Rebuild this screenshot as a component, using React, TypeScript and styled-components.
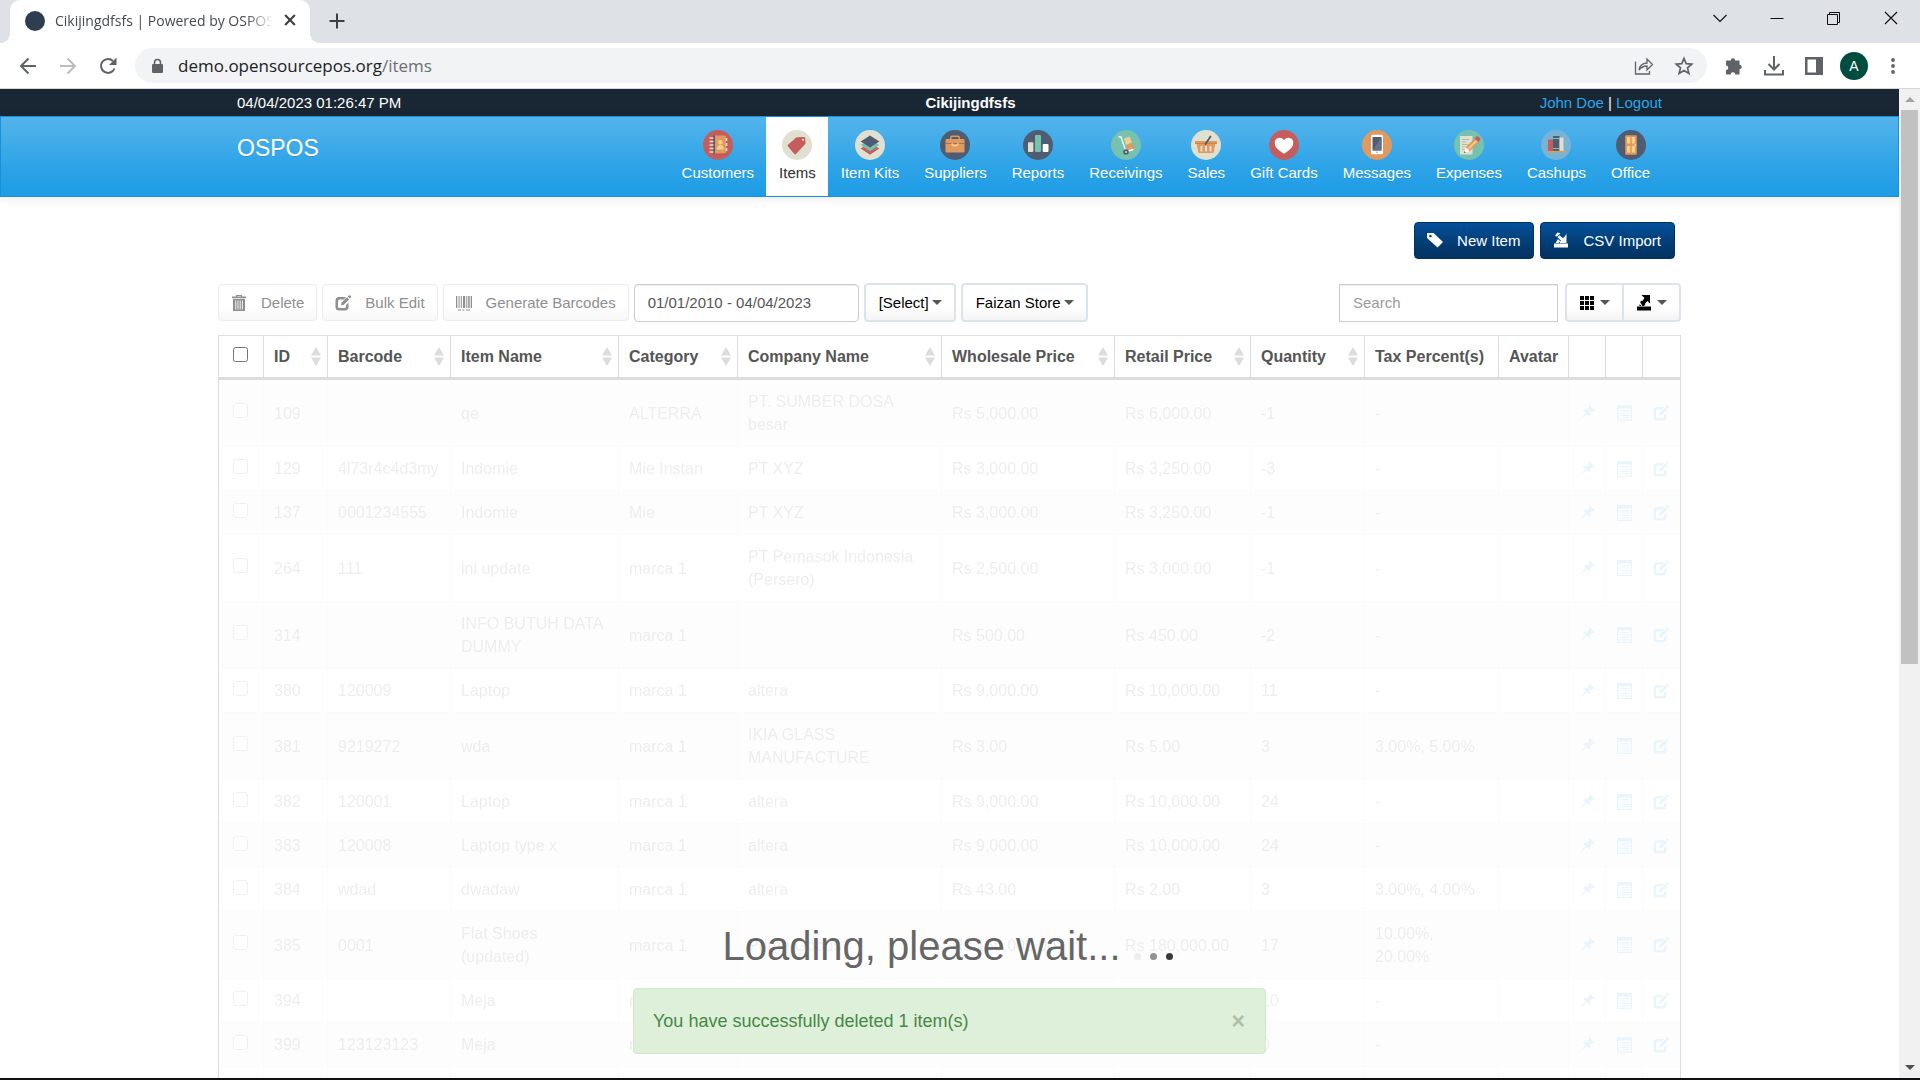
import React from "react";
import styled, { createGlobalStyle, css } from "styled-components";

const GlobalStyle = createGlobalStyle`
  *, *::before, *::after { box-sizing: border-box; }
  body {
    margin: 0;
    background: #fff;
    color: #555;
    font-family: "Liberation Sans", Arial, sans-serif;
    font-size: 15px;
  }
  button, input, select { font: inherit; }
  a { text-decoration: none; }
  svg { display: block; flex: none; }
`;

/* ---------- Browser window ---------- */

const Window = styled.div`
  display: flex;
  flex-direction: column;
  height: 100vh;
  overflow: hidden;
  border-bottom: 2px solid #101013;
`;

const TabStrip = styled.header`
  display: flex;
  align-items: stretch;
  height: 43px;
  flex: none;
  padding-left: 10px;
  background: #dee1e6;
  font-family: "Open Sans", "Noto Sans", sans-serif;
`;

const Tab = styled.div`
  position: relative;
  display: flex;
  align-items: center;
  gap: 10px;
  width: 300px;
  padding: 0 13px 2px 15px;
  border-radius: 10px 10px 0 0;
  background: #fff;
  color: #45494d;
  font-size: 14px;
  &::before, &::after {
    content: "";
    position: absolute;
    bottom: 0;
    width: 10px;
    height: 10px;
  }
  &::before { left: -10px; background: radial-gradient(circle at 0 0, transparent 10px, #fff 10px); }
  &::after { right: -10px; background: radial-gradient(circle at 100% 0, transparent 10px, #fff 10px); }
`;

const Favicon = styled.span`
  flex: none;
  width: 20px;
  height: 20px;
  border-radius: 50%;
  background: #2c3e50;
`;

const TabTitle = styled.span`
  flex: 1;
  overflow: hidden;
  white-space: nowrap;
  mask-image: linear-gradient(to right, #000 88%, transparent);
`;

const GhostButton = styled.button<{ $w?: number }>`
  display: flex;
  align-items: center;
  justify-content: center;
  flex: none;
  width: ${(p) => p.$w ?? 40}px;
  padding: 0;
  border: 0;
  background: none;
  color: #5f6368;
`;

const TabButton = styled(GhostButton)`
  padding-bottom: 1px;
  color: #3c4043;
`;

const WindowControls = styled.div`
  display: flex;
  height: 36px;
  margin-left: auto;
  padding-right: 1px;
`;

const WindowButton = styled(GhostButton)`
  width: 57px;
  color: #111;
`;

const AddressBar = styled.div`
  display: flex;
  align-items: center;
  height: 46px;
  flex: none;
  padding: 0 8px;
  border-bottom: 1px solid #d5d7da;
  background: #fff;
`;

const Omnibox = styled.label`
  display: flex;
  align-items: center;
  flex: 1;
  height: 35px;
  margin: 0 7px;
  padding: 0 3px 0 15px;
  border-radius: 18px;
  background: #f1f3f4;
  color: #5f6368;
  font-family: "Open Sans", "Noto Sans", sans-serif;
  font-size: 17px;
`;

const Url = styled.span`
  flex: 1;
  padding-left: 13px;
  color: #6b6f74;
  b { color: #202124; font-weight: 400; }
`;

const Avatar = styled.button`
  width: 28px;
  height: 28px;
  margin: 0 6px;
  padding: 0;
  border: 0;
  border-radius: 50%;
  background: #004d40;
  color: #fff;
  font-size: 14px;
`;

const Viewport = styled.div`
  position: relative;
  display: flex;
  flex: 1;
  min-height: 0;
`;

const Page = styled.div`
  position: relative;
  flex: 1;
  min-width: 0;
  overflow: hidden;
`;

const ScrollTrack = styled.div`
  display: flex;
  flex-direction: column;
  align-items: center;
  width: 21px;
  background: #f1f1f1;
`;

const ScrollArrow = styled.span<{ $down?: boolean }>`
  display: flex;
  align-items: center;
  justify-content: center;
  height: 21px;
  color: ${(p) => (p.$down ? "#505050" : "#a3a3a3")};
  ${(p) => p.$down && css`margin-top: auto; transform: rotate(180deg);`}
`;

const ScrollThumb = styled.span`
  width: 17px;
  height: 56%;
  background: #c1c1c1;
`;

/* ---------- Site header ---------- */

const Container = styled.div`
  width: 100%;
  max-width: 1463px;
  margin: 0 auto;
`;

const TopBar = styled.div`
  background: #192734;
  color: #fff;
  line-height: 27px;
`;

const TopBarInner = styled(Container)`
  display: flex;
  justify-content: space-between;
  padding: 0 19px;
  a { color: #2fa4e7; }
`;

const NavBar = styled.nav`
  height: 81px;
  border: 1px solid #1a8fdb;
  background: linear-gradient(#54b4eb, #2fa4e7 60%, #1d9ce5);
  box-shadow: 0 1px 10px rgba(0, 0, 0, 0.1);
`;

const NavInner = styled(Container)`
  display: flex;
  justify-content: space-between;
  height: 100%;
  padding: 0 19px;
`;

const Brand = styled.a`
  padding-top: 18px;
  color: #fff;
  font-size: 23px;
  line-height: 26px;
  text-shadow: 0 1px 0 rgba(0, 0, 0, 0.1);
`;

const NavList = styled.ul`
  display: flex;
  margin: 0;
  padding: 0;
  list-style: none;
`;

const NavLink = styled.a<{ $active?: boolean }>`
  display: flex;
  flex-direction: column;
  align-items: center;
  gap: 2px;
  height: 100%;
  padding: 13px 12px 0 13px;
  background: ${(p) => (p.$active ? "#fff" : "transparent")};
  color: ${(p) => (p.$active ? "#333" : "#fff")};
  line-height: 22px;
  text-shadow: 0 1px 0 rgba(0, 0, 0, 0.1);
`;

/* ---------- Item list ---------- */

const TitleBar = styled.div`
  display: flex;
  justify-content: flex-end;
  gap: 6px;
  padding: 25px 6px 0;
`;

const PrimaryButton = styled.button`
  display: flex;
  align-items: center;
  gap: 14px;
  height: 37px;
  padding: 0 13px 1px 12px;
  border: 1px solid #02325f;
  border-radius: 4px;
  background: linear-gradient(#04519b, #033c73 60%, #02325f);
  color: #fff;
`;

const Toolbar = styled.div`
  display: flex;
  align-items: center;
  gap: 5px;
  height: 39px;
  margin: 24px 0 13px;
`;

const ToolButton = styled.button`
  display: flex;
  align-items: center;
  gap: 14px;
  height: 37px;
  padding: 0 12px;
  border: 1px solid #ececec;
  border-radius: 4px;
  background: linear-gradient(#fff, #fff 60%, #f7f7f7);
  color: #8f8f8f;
`;

const fieldStyle = css`
  height: 38px;
  padding: 0 13px;
  border: 1px solid #ccc;
  background: #fff;
  color: #555;
  box-shadow: inset 0 1px 1px rgba(0, 0, 0, 0.075);
  outline: 0;
`;

const DateField = styled.input`
  ${fieldStyle}
  width: 225px;
  border-radius: 4px;
`;

const SearchField = styled.input`
  ${fieldStyle}
  width: 219px;
  margin-left: auto;
  &::placeholder { color: #999; }
`;

const menuSurface = css`
  height: 39px;
  border: 2px solid #dbe4ec;
  background: linear-gradient(#fff, #fff 60%, #f4f4f4);
  color: #000;
`;

const SelectBox = styled.label`
  position: relative;
  display: flex;
  select {
    ${menuSurface}
    appearance: none;
    padding: 0 24px 0 13px;
    border-radius: 4px;
  }
  svg { position: absolute; right: 14px; top: 17px; color: #555; pointer-events: none; }
`;

const MenuGroup = styled.div`
  display: flex;
  margin-left: 2px;
`;

const MenuButton = styled.button`
  ${menuSurface}
  display: flex;
  align-items: center;
  gap: 5px;
  padding: 0 12px;
  border-radius: 4px 0 0 4px;
  & + & { margin-left: -2px; border-radius: 0 4px 4px 0; }
  svg:last-child { color: #555; }
`;

const TableFrame = styled.div`
  border: 1px solid #ddd;
`;

const Table = styled.table`
  width: 100%;
  border-collapse: separate;
  border-spacing: 0;
  table-layout: fixed;
  font-size: 16px;
  line-height: 23px;
  th, td {
    padding: 10px;
    border-left: 1px solid #ddd;
    text-align: left;
  }
  th:first-child, td:first-child { border-left: 0; padding-left: 14px; }
  th { padding: 9px 6px 9px 10px; border-bottom: 3px solid #ddd; white-space: nowrap; color: #555; }
  td { height: 44px; border-bottom: 1px solid #ddd; vertical-align: middle; }
  tbody { opacity: 0.1; }
  tbody tr:nth-child(odd) { background: #f5f5f5; }
`;

const HeadCell = styled.span`
  display: flex;
  align-items: center;
  justify-content: space-between;
`;

const Check = styled.input`
  display: block;
  width: 15px;
  height: 15px;
  margin: 0 0 5px;
`;

const RowAction = styled.a`
  display: flex;
  color: #2fa4e7;
`;

/* ---------- Overlays ---------- */

const Notices = styled.div`
  position: absolute;
  inset: auto 0 24px;
  display: flex;
  flex-direction: column;
  align-items: center;
`;

const Loading = styled.div`
  display: flex;
  align-items: flex-end;
  gap: 13px;
  margin-bottom: 19px;
  padding-right: 4px;
  color: rgba(60, 60, 60, 0.8);
  font-size: 40px;
  line-height: 46px;
`;

const Dots = styled.span`
  display: flex;
  gap: 9px;
  padding-bottom: 9px;
`;

const Dot = styled.i<{ $color: string }>`
  width: 7px;
  height: 7px;
  border-radius: 50%;
  background: ${(p) => p.$color};
`;

const Alert = styled.div`
  display: flex;
  align-items: center;
  justify-content: space-between;
  width: 633px;
  max-width: 100%;
  height: 66px;
  padding: 0 20px 0 19px;
  border: 1px solid #d0e9c6;
  border-radius: 4px;
  background: #def0d9;
  color: #468847;
  font-size: 18px;
`;

const CloseButton = styled.button`
  padding: 0;
  border: 0;
  background: none;
  color: #aec0aa;
  font-size: 23px;
  font-weight: 700;
`;

/* ---------- Glyphs ---------- */

const Glyph = ({ d, size = 16, children }: { d?: string; size?: number; children?: React.ReactNode }) => (
  <svg width={size} height={size} viewBox="0 0 16 16" fill="currentColor" fillRule="evenodd" aria-hidden="true">
    {d && <path d={d} />}
    {children}
  </svg>
);

const TrashIcon = () => (
  <Glyph>
    <path d="M5 0h6v1.500h4V3.200H1V1.500h4zM6.200 1v.6h3.600V1z" />
    <path d="M2 4h12v12H2zM4.300 5.500v9h.9v-9zm2.200 0v9h.9v-9zm2.200 0v9h.9v-9zm2.200 0v9h.9v-9z" />
  </Glyph>
);
const EditIcon = () => (
  <Glyph>
    <path d="M4 2h7L9 4.500H4.500Q3 4.500 3 6v5.500Q3 13 4.500 13H9.500Q11 13 11 11.500V10l2.500-2.500V12Q13.500 15.500 10 15.500H4Q.5 15.500.5 12V5.500Q.5 2 4 2z" />
    <path d="M6 10.500 6.600 7.600 12 2.200 14.200 4.400 8.800 9.800zM12.700 1.500 14 .3Q14.500 0 15 .4L15.900 1.300Q16.300 2 15.800 2.500L14.900 3.600z" />
  </Glyph>
);
const BarcodeIcon = () => (
  <Glyph d="M0 1h1.300v12H0zM2.600 1h1v12h-1zM4.800 1h1v12h-1zM7 1h2.200v12H7zM10.300 1h1v12h-1zM12.200 1h1.500v12h-1.500zM14.700 1H16v12h-1.300zM2 14.500h3v1H2zM6.500 14.500h2v1h-2zM10 14.500h4v1h-4z" />
);
const TagIcon = () => <Glyph d="M0 1h6.500L16 10l-5.500 5.500L0 6zM3.400 2.700a1.300 1.300 0 1 0 .1 0z" />;
const ImportIcon = () => (
  <Glyph d="M1 11.500h14v4H1zM2.500 11 5 7 7 9 7 11zM13.500 1.500V11H5.500L8 8.500 4.500 5.200 6.500 3.200 10 6.200 12.500 3.500zM2 3.500 4.500.5 7.500 1.200 5.500 3 4 4.800z" />
);
const GridIcon = () => (
  <Glyph d="M1 1h4v4H1zM6 1h4v4H6zM11 1h4v4h-4zM1 6h4v4H1zM6 6h4v4H6zM11 6h4v4h-4zM1 11h4v4H1zM6 11h4v4H6zM11 11h4v4h-4z" />
);
const ExportIcon = () => (
  <Glyph d="M1 11.500h14v4H1zM5.500 0H14v8.500L11.500 6 9 8.500 6.500 6 8.500 3zM4 7 6 5.500 9.500 9 8 11H6.500zM3.500 9 5.500 11h-2z" />
);
const PinIcon = () => (
  <Glyph d="M10.500 0 16 5.500Q14.500 6.500 13.500 5.800L11.200 8.200Q11.500 10.500 10 11.500L7.600 9.200 0 16 6.400 8 4 5.700Q5.500 4.500 7.800 4.900L10.200 2.500Q9.500 1 10.500 0z" />
);
const ListIcon = () => (
  <Glyph d="M1 0h15v16H1zM2.300 3.500v11.200h12.400V3.500zM3.500 5h1.300v1.200H3.500zM6 5h7.500v1.200H6zM3.500 7.400h1.300v1.200H3.500zM6 7.400h7.500v1.200H6zM3.500 9.800h1.300V11H3.500zM6 9.800h7.500V11H6zM3.500 12.200h1.300v1.200H3.500zM6 12.200h7.500v1.200H6z" />
);
const Caret = () => (
  <svg width="10" height="5" viewBox="0 0 10 5" fill="currentColor" aria-hidden="true"><path d="M0 0h10L5 5z" /></svg>
);
const SortIcon = () => (
  <svg width="10" height="19" viewBox="0 0 10 19" fill="#dcdcdc" aria-hidden="true"><path d="M5 0l5 8.500H0zM5 19l5-8.500H0z" /></svg>
);

const Line = ({ d, size = 20, w = 2 }: { d: string; size?: number; w?: number }) => (
  <svg width={size} height={size} viewBox="0 0 20 20" fill="none" stroke="currentColor" strokeWidth={w} aria-hidden="true">
    <path d={d} />
  </svg>
);

/* ---------- Module badges ---------- */

const red = "#c75c5c";
const sand = "#e0e0d1";
const slate = "#4f5d73";
const mint = "#76c2af";
const amber = "#e0995e";
const cream = "#f5cf87";

const modules: { name: string; disc: string; art: React.ReactNode }[] = [
  {
    name: "Customers", disc: red,
    art: (<>
      <rect x="10" y="6.500" width="13" height="18" rx="1.500" fill="#b34f4f" />
      <rect x="10" y="5.500" width="13" height="18" rx="1.500" fill={amber} />
      <rect x="10" y="5.500" width="2" height="18" fill={slate} />
      <path d="M6.500 8h4M6.500 11.500h4M6.500 15h4M6.500 18.500h4M6.500 22h4" stroke={sand} strokeWidth="1.400" />
      <path d="M23.500 8v3M23.500 13v3M23.500 18v3" stroke={sand} strokeWidth="1.600" />
      <circle cx="17.300" cy="12.300" r="2.300" fill={cream} />
      <path d="M13.800 19.500q0-4.500 3.500-4.500t3.500 4.500z" fill={cream} />
    </>),
  },
  {
    name: "Items", disc: sand,
    art: <path d="M6 14.800 14.500 7.300l7.700-.3q1 0 1 1l.3 5.800-9.500 10.200q-.8.900-1.600 0L6 16.500q-.9-.9 0-1.700zM21 8.800a1 1 0 1 0 .1 0z" fill={red} fillRule="evenodd" />,
  },
  {
    name: "Item Kits", disc: sand,
    art: (<>
      <path d="M5.700 18.500 9 16.500l6 3.800 6-3.800 3.300 2L15 24.800z" fill={red} />
      <path d="M5.700 15 9 13l6 3.800L21 13l3.300 2L15 21.200z" fill={mint} />
      <path d="M15 5.500 24.300 11.500 15 17.500 5.700 11.500z" fill={slate} />
    </>),
  },
  {
    name: "Suppliers", disc: slate,
    art: (<>
      <path d="M10.800 9.500V7.500q0-1.300 1.300-1.300h5.800q1.300 0 1.300 1.300v2" fill="none" stroke={amber} strokeWidth="1.500" />
      <rect x="5.500" y="9" width="19" height="13.500" rx="1" fill={amber} />
      <path d="M5.500 13.500h19" stroke="#a9714a" strokeWidth="1" />
      <path d="M12 13.300q0 2.500 3 2.500t3-2.500" fill="none" stroke={cream} strokeWidth="1.400" />
    </>),
  },
  {
    name: "Reports", disc: slate,
    art: (<>
      <rect x="5" y="12.300" width="5.400" height="9.700" rx="1" fill={sand} />
      <rect x="12" y="5" width="6" height="17" rx="1" fill={mint} />
      <rect x="19.700" y="14" width="5.800" height="8" rx="1" fill="#fff" />
    </>),
  },
  {
    name: "Receivings", disc: mint,
    art: (<>
      <path d="M13 8.500 18.500 6.500 21 12.500 15 15z" fill={cream} />
      <path d="M14.500 15.500 21.500 13 23 18.500 16.500 21z" fill={amber} />
      <path d="M7.500 6.500 10 7 15 21.500M15 21.500 22.500 19.500" fill="none" stroke="#fff" strokeWidth="1.300" />
      <circle cx="15" cy="22" r="2.800" fill={slate} />
      <circle cx="15" cy="22" r="1" fill={sand} />
    </>),
  },
  {
    name: "Sales", disc: sand,
    art: (<>
      <path d="M4 11h22v2.500h-1.500L22.500 23h-15L5.500 13.500H4z" fill={amber} />
      <path d="M4 13.500h22" stroke="#c27f4a" strokeWidth=".8" />
      <path d="M10.500 16v5.500M15 16v5.500M19.500 16v5.500" stroke={sand} strokeWidth="2" />
      <path d="M19.500 6.500 14.500 14" stroke={slate} strokeWidth="1.800" strokeLinecap="round" />
    </>),
  },
  {
    name: "Gift Cards", disc: red,
    art: <path d="M15 10q2-2.300 4.500-2.300 4.800.3 4.800 5.300 0 5.500-9.300 10.700Q5.700 18.500 5.700 13q0-5 4.800-5.300Q13 7.700 15 10z" fill="#fff" />,
  },
  {
    name: "Messages", disc: amber,
    art: (<>
      <rect x="9" y="4.800" width="12" height="19.400" rx="1.500" fill="#fff" />
      <rect x="10.500" y="7" width="9" height="13.500" fill={slate} />
      <path d="M10.500 20.500 19.500 7v13.500z" fill="#657389" />
      <circle cx="15" cy="22.300" r=".8" fill="#999" />
    </>),
  },
  {
    name: "Expenses", disc: mint,
    art: (<>
      <path d="M6 6h12.500v18.500H6z" fill={sand} />
      <path d="M8 9.500h7M8 12h4M8 14.500h6M8 17h3M8 19.500h3" stroke="#b5b5a6" strokeWidth=".9" />
      <path d="M11.500 17.500 21 8 25 12 15.500 21.500z" fill={amber} />
      <path d="M13 19 22.500 9.500l1.300 1.300L14.300 20.300z" fill={cream} />
      <path d="M20.500 8.500 22.500 6.500Q23.500 5.800 24.500 6.700L25.800 8Q26.800 9 26 10L24.300 12z" fill={red} />
      <path d="M11.500 17.500 10 23l5.500-1.500z" fill="#fff" />
      <path d="M10.500 21 10 23 12 22.500z" fill={slate} />
    </>),
  },
  {
    name: "Cashups", disc: "#77b3d4",
    art: (<>
      <rect x="7" y="9.500" width="5" height="11.500" fill={red} />
      <rect x="12" y="6" width="6.500" height="15" fill={slate} />
      <path d="M12 8.500h6.500M12 18.500h6.500" stroke={mint} strokeWidth="1" />
      <rect x="18.500" y="7.500" width="4" height="13.500" fill={sand} />
      <path d="M5.500 21.700h19" stroke={amber} strokeWidth="1.600" />
    </>),
  },
  {
    name: "Office", disc: slate,
    art: (<>
      <rect x="9.200" y="5.300" width="11.600" height="19.400" rx="1" fill={amber} />
      <path d="M11 7h3.200v6.500H11zM15.800 7H19v6.500h-3.200zM11 16h3.200v6.500H11zM15.800 16H19v6.500h-3.200z" fill={cream} />
      <circle cx="19.300" cy="15" r="1.100" fill={cream} />
    </>),
  },
];

/* ---------- Data ---------- */

const columns: { label: string; width: number; sortable?: boolean }[] = [
  { label: "ID", width: 64, sortable: true },
  { label: "Barcode", width: 123, sortable: true },
  { label: "Item Name", width: 168, sortable: true },
  { label: "Category", width: 119, sortable: true },
  { label: "Company Name", width: 204, sortable: true },
  { label: "Wholesale Price", width: 173, sortable: true },
  { label: "Retail Price", width: 136, sortable: true },
  { label: "Quantity", width: 114, sortable: true },
  { label: "Tax Percent(s)", width: 134 },
  { label: "Avatar", width: 70 },
  { label: "", width: 37 },
  { label: "", width: 37 },
  { label: "", width: 38 },
];

const items: string[][] = [
  ["109", "", "qe", "ALTERRA", "PT. SUMBER DOSA besar", "Rs 5,000.00", "Rs 6,000.00", "-1", "-"],
  ["129", "4l73r4c4d3my", "Indomie", "Mie Instan", "PT XYZ", "Rs 3,000.00", "Rs 3,250.00", "-3", "-"],
  ["137", "0001234555", "Indomie", "Mie", "PT XYZ", "Rs 3,000.00", "Rs 3,250.00", "-1", "-"],
  ["264", "111", "ini update", "marca 1", "PT Pemasok Indonesia (Persero)", "Rs 2,500.00", "Rs 3,000.00", "-1", "-"],
  ["314", "", "INFO BUTUH DATA DUMMY", "marca 1", "", "Rs 500.00", "Rs 450.00", "-2", "-"],
  ["380", "120009", "Laptop", "marca 1", "altera", "Rs 9,000.00", "Rs 10,000.00", "11", "-"],
  ["381", "9219272", "wda", "marca 1", "IKIA GLASS MANUFACTURE", "Rs 3.00", "Rs 5.00", "3", "3.00%, 5.00%"],
  ["382", "120001", "Laptop", "marca 1", "altera", "Rs 9,000.00", "Rs 10,000.00", "24", "-"],
  ["383", "120008", "Laptop type x", "marca 1", "altera", "Rs 9,000.00", "Rs 10,000.00", "24", "-"],
  ["384", "wdad", "dwadaw", "marca 1", "altera", "Rs 43.00", "Rs 2.00", "3", "3.00%, 4.00%"],
  ["385", "0001", "Flat Shoes (updated)", "marca 1", "Prime Goods", "Rs 150,000.00", "Rs 180,000.00", "17", "10.00%, 20.00%"],
  ["394", "", "Meja", "marca 1", "", "", "", "10", "-"],
  ["399", "123123123", "Meja", "marca 1", "", "", "", "0", "-"],
];

const ItemRow = ({ cells }: { cells: string[] }) => (
  <tr>
    <td><Check type="checkbox" aria-label={`Select item ${cells[0]}`} /></td>
    {cells.map((text, i) => <td key={i}>{text}</td>)}
    <td />
    <td><RowAction href="#" aria-label="Inventory"><PinIcon /></RowAction></td>
    <td><RowAction href="#" aria-label="Details"><ListIcon /></RowAction></td>
    <td><RowAction href="#" aria-label="Edit"><EditIcon /></RowAction></td>
  </tr>
);

const BrowserChrome = () => (
  <>
    <TabStrip>
      <Tab>
        <Favicon />
        <TabTitle>Cikijingdfsfs | Powered by OSPOS</TabTitle>
        <TabButton $w={14} aria-label="Close tab"><Line size={14} w={3} d="M3 3 17 17M17 3 3 17" /></TabButton>
      </Tab>
      <TabButton $w={54} aria-label="New tab"><Line size={20} d="M10 2.500v15M2.500 10h15" /></TabButton>
      <WindowControls>
        <WindowButton aria-label="Search tabs"><Line size={20} w={1.2} d="M3.500 7 10 13.500 16.500 7" /></WindowButton>
        <WindowButton aria-label="Minimize"><Line size={20} w={1} d="M3.500 10.500H16.500" /></WindowButton>
        <WindowButton aria-label="Restore"><Line size={20} w={1} d="M3.500 6.500h10v10h-10zM5.500 6V4.500h10v10H14" /></WindowButton>
        <WindowButton aria-label="Close"><Line size={20} w={1.2} d="M4 4 16 16M16 4 4 16" /></WindowButton>
      </WindowControls>
    </TabStrip>
    <AddressBar>
      <GhostButton aria-label="Back"><Line d="M18 10H3M10.500 2.500 3 10l7.500 7.500" /></GhostButton>
      <GhostButton aria-label="Forward"><svg width="20" height="20" viewBox="0 0 20 20" fill="none" stroke="#babcbe" strokeWidth="2"><path d="M2 10h15M9.500 2.500 17 10l-7.500 7.500" /></svg></GhostButton>
      <GhostButton aria-label="Reload">
        <svg width="20" height="20" viewBox="0 0 20 20"><path d="M16.500 12.500A7 7 0 1 1 15 5" fill="none" stroke="currentColor" strokeWidth="2" /><path d="M18.500 1.500V9H11z" fill="currentColor" /></svg>
      </GhostButton>
      <Omnibox>
        <svg width="15" height="16" viewBox="0 0 15 16"><rect x="2" y="6" width="11" height="9" rx="1" fill="currentColor" /><path d="M4.500 7V4.500a3 3 0 0 1 6 0V7" fill="none" stroke="currentColor" strokeWidth="1.600" /></svg>
        <Url><b>demo.opensourcepos.org</b>/items</Url>
        <GhostButton aria-label="Share">
          <svg width="20" height="20" viewBox="0 0 20 20" fill="none" stroke="currentColor" strokeWidth="1.300"><path d="M1.500 5.500v12.500H15.500V15M5 14Q6 7.500 13 7V3l5.500 5.500L13 14v-4Q8 10 5 14z" /></svg>
        </GhostButton>
        <GhostButton aria-label="Bookmark">
          <svg width="20" height="20" viewBox="0 0 20 20" fill="none" stroke="currentColor" strokeWidth="1.700"><path d="M10 2.500 12.200 7.700 17.800 8.200 13.500 11.900 14.900 17.400 10 14.500 5.100 17.400 6.500 11.900 2.200 8.200 7.800 7.700z" /></svg>
        </GhostButton>
      </Omnibox>
      <GhostButton aria-label="Extensions">
        <svg width="20" height="20" viewBox="0 0 20 20" fill="currentColor"><path d="M3 4.500H6.800a2.200 2.200 0 0 1 4.400 0H15.500v4.300a2.200 2.200 0 0 1 0 4.400V18.500H11.300a2.300 2.300 0 0 0-4.600 0H2V14a2.300 2.300 0 0 0 0-4.600V5.500Q2 4.500 3 4.500z" /></svg>
      </GhostButton>
      <GhostButton aria-label="Downloads"><Line d="M10 0v13M4.500 8 10 13.500 15.500 8M1 14v4.500h18V14" /></GhostButton>
      <GhostButton aria-label="Side panel">
        <svg width="20" height="20" viewBox="0 0 20 20" fill="currentColor" fillRule="evenodd"><path d="M1 1h18v18H1zM3.500 3.500v13H12v-13z" /></svg>
      </GhostButton>
      <Avatar aria-label="Profile">A</Avatar>
      <GhostButton $w={38} aria-label="Menu">
        <svg width="6" height="18" viewBox="0 0 6 18" fill="currentColor"><circle cx="3" cy="3" r="1.900" /><circle cx="3" cy="9" r="1.900" /><circle cx="3" cy="15" r="1.900" /></svg>
      </GhostButton>
    </AddressBar>
  </>
);

const App = () => (
  <Window>
    <GlobalStyle />
    <BrowserChrome />
    <Viewport>
      <Page>
        <TopBar>
          <TopBarInner>
            <span>04/04/2023 01:26:47 PM</span>
            <strong>Cikijingdfsfs</strong>
            <span><a href="#">John Doe</a> | <a href="#">Logout</a></span>
          </TopBarInner>
        </TopBar>
        <NavBar>
          <NavInner>
            <Brand href="#">OSPOS</Brand>
            <NavList>
              {modules.map((m) => (
                <li key={m.name}>
                  <NavLink href="#" $active={m.name === "Items"}>
                    <svg width="30" height="30" viewBox="0 0 30 30" aria-hidden="true">
                      <circle cx="15" cy="15" r="15" fill={m.disc} />
                      {m.art}
                    </svg>
                    {m.name}
                  </NavLink>
                </li>
              ))}
            </NavList>
          </NavInner>
        </NavBar>
        <Container as="main">
          <TitleBar>
            <PrimaryButton><TagIcon />New Item</PrimaryButton>
            <PrimaryButton><ImportIcon />CSV Import</PrimaryButton>
          </TitleBar>
          <Toolbar>
            <ToolButton disabled><TrashIcon />Delete</ToolButton>
            <ToolButton disabled><EditIcon />Bulk Edit</ToolButton>
            <ToolButton disabled><BarcodeIcon />Generate Barcodes</ToolButton>
            <DateField aria-label="Date range" defaultValue="01/01/2010 - 04/04/2023" />
            <SelectBox>
              <select aria-label="Filters"><option>[Select]</option></select>
              <Caret />
            </SelectBox>
            <SelectBox>
              <select aria-label="Stock location"><option>Faizan Store</option></select>
              <Caret />
            </SelectBox>
            <SearchField type="text" placeholder="Search" aria-label="Search" />
            <MenuGroup>
              <MenuButton aria-label="Columns"><GridIcon /><Caret /></MenuButton>
              <MenuButton aria-label="Export data"><ExportIcon /><Caret /></MenuButton>
            </MenuGroup>
          </Toolbar>
          <TableFrame>
            <Table>
              <colgroup>
                <col width={44} />
                {columns.map((c, i) => <col key={i} width={c.width} />)}
              </colgroup>
              <thead>
                <tr>
                  <th><Check type="checkbox" aria-label="Select all items" /></th>
                  {columns.map((c, i) => (
                    <th key={i}><HeadCell>{c.label}{c.sortable && <SortIcon />}</HeadCell></th>
                  ))}
                </tr>
              </thead>
              <tbody>
                {items.map((row) => <ItemRow key={row[0]} cells={row} />)}
                <tr>{Array.from({ length: 14 }, (_, i) => <td key={i} />)}</tr>
              </tbody>
            </Table>
          </TableFrame>
        </Container>
        <Notices>
          <Loading role="status">
            Loading, please wait...
            <Dots><Dot $color="#eee" /><Dot $color="#909294" /><Dot $color="#373a3f" /></Dots>
          </Loading>
          <Alert role="alert">
            You have successfully deleted 1 item(s)
            <CloseButton aria-label="Dismiss">×</CloseButton>
          </Alert>
        </Notices>
      </Page>
      <ScrollTrack>
        <ScrollArrow><svg width="10" height="5" viewBox="0 0 10 5" fill="currentColor"><path d="M0 5h10L5 0z" /></svg></ScrollArrow>
        <ScrollThumb />
        <ScrollArrow $down><svg width="10" height="5" viewBox="0 0 10 5" fill="currentColor"><path d="M0 5h10L5 0z" /></svg></ScrollArrow>
      </ScrollTrack>
    </Viewport>
  </Window>
);

export default App;
